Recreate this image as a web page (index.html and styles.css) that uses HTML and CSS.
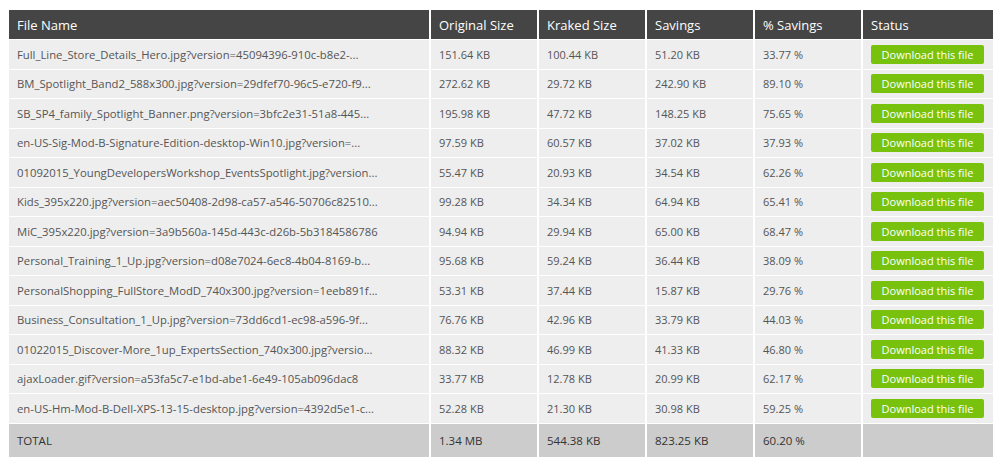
FILE: index.html
```html
<!DOCTYPE html>
<html>
<head>
<meta charset="utf-8">
<link rel="stylesheet" href="styles.css">
</head>
<body>
<table class="results">
  <thead>
    <tr>
      <th class="c-name">File Name</th>
      <th class="c-num">Original Size</th>
      <th class="c-num">Kraked Size</th>
      <th class="c-num">Savings</th>
      <th class="c-num">% Savings</th>
      <th class="c-status">Status</th>
    </tr>
  </thead>
  <tbody>
    <tr><td>Full_Line_Store_Details_Hero.jpg?version=45094396-910c-b8e2-...</td><td>151.64 KB</td><td>100.44 KB</td><td>51.20 KB</td><td>33.77 %</td><td><a class="btn">Download this file</a></td></tr>
    <tr><td>BM_Spotlight_Band2_588x300.jpg?version=29dfef70-96c5-e720-f9...</td><td>272.62 KB</td><td>29.72 KB</td><td>242.90 KB</td><td>89.10 %</td><td><a class="btn">Download this file</a></td></tr>
    <tr><td>SB_SP4_family_Spotlight_Banner.png?version=3bfc2e31-51a8-445...</td><td>195.98 KB</td><td>47.72 KB</td><td>148.25 KB</td><td>75.65 %</td><td><a class="btn">Download this file</a></td></tr>
    <tr><td>en-US-Sig-Mod-B-Signature-Edition-desktop-Win10.jpg?version=...</td><td>97.59 KB</td><td>60.57 KB</td><td>37.02 KB</td><td>37.93 %</td><td><a class="btn">Download this file</a></td></tr>
    <tr><td>01092015_YoungDevelopersWorkshop_EventsSpotlight.jpg?version...</td><td>55.47 KB</td><td>20.93 KB</td><td>34.54 KB</td><td>62.26 %</td><td><a class="btn">Download this file</a></td></tr>
    <tr><td>Kids_395x220.jpg?version=aec50408-2d98-ca57-a546-50706c82510...</td><td>99.28 KB</td><td>34.34 KB</td><td>64.94 KB</td><td>65.41 %</td><td><a class="btn">Download this file</a></td></tr>
    <tr><td>MiC_395x220.jpg?version=3a9b560a-145d-443c-d26b-5b3184586786</td><td>94.94 KB</td><td>29.94 KB</td><td>65.00 KB</td><td>68.47 %</td><td><a class="btn">Download this file</a></td></tr>
    <tr><td>Personal_Training_1_Up.jpg?version=d08e7024-6ec8-4b04-8169-b...</td><td>95.68 KB</td><td>59.24 KB</td><td>36.44 KB</td><td>38.09 %</td><td><a class="btn">Download this file</a></td></tr>
    <tr><td>PersonalShopping_FullStore_ModD_740x300.jpg?version=1eeb891f...</td><td>53.31 KB</td><td>37.44 KB</td><td>15.87 KB</td><td>29.76 %</td><td><a class="btn">Download this file</a></td></tr>
    <tr><td>Business_Consultation_1_Up.jpg?version=73dd6cd1-ec98-a596-9f...</td><td>76.76 KB</td><td>42.96 KB</td><td>33.79 KB</td><td>44.03 %</td><td><a class="btn">Download this file</a></td></tr>
    <tr><td>01022015_Discover-More_1up_ExpertsSection_740x300.jpg?versio...</td><td>88.32 KB</td><td>46.99 KB</td><td>41.33 KB</td><td>46.80 %</td><td><a class="btn">Download this file</a></td></tr>
    <tr><td>ajaxLoader.gif?version=a53fa5c7-e1bd-abe1-6e49-105ab096dac8</td><td>33.77 KB</td><td>12.78 KB</td><td>20.99 KB</td><td>62.17 %</td><td><a class="btn">Download this file</a></td></tr>
    <tr><td>en-US-Hm-Mod-B-Dell-XPS-13-15-desktop.jpg?version=4392d5e1-c...</td><td>52.28 KB</td><td>21.30 KB</td><td>30.98 KB</td><td>59.25 %</td><td><a class="btn">Download this file</a></td></tr>
  </tbody>
  <tfoot>
    <tr><td>TOTAL</td><td>1.34 MB</td><td>544.38 KB</td><td>823.25 KB</td><td>60.20 %</td><td></td></tr>
  </tfoot>
</table>
</body>
</html>
```

FILE: styles.css
```css
html, body {
  margin: 0;
  padding: 0;
  background: #ffffff;
}

body {
  padding: 10px 8px 0 9px;
  font-family: "Open Sans", "Liberation Sans", sans-serif;
}

.results {
  width: 984px;
  border-collapse: separate;
  border-spacing: 0;
  table-layout: fixed;
}

.results th,
.results td {
  border-right: 2px solid #ffffff;
  border-bottom: 1px solid #ffffff;
  padding: 0 8px;
  text-align: left;
  white-space: nowrap;
  overflow: hidden;
}

.results tr > :last-child { border-right: none; }
.results tfoot td { border-bottom: none; }

.results th {
  background: #454545;
  color: #ffffff;
  font-size: 13px;
  font-weight: 400;
  height: 29px;
}

.c-name { width: 404px; }
.c-num { width: 90px; }
.c-status { width: 114px; }

.results tbody td {
  background: #eeeeee;
  color: #555555;
  font-size: 11px;
  height: 28.5px;
}

.results tbody td:first-child {
  font-size: 11.3px;
}

.results tfoot td {
  background: #cccccc;
  color: #333333;
  font-size: 11.5px;
  height: 33px;
}

.btn {
  display: block;
  width: 113px;
  height: 19px;
  line-height: 19px;
  background: #78c20e;
  color: #ffffff;
  font-size: 11px;
  text-align: center;
  border-radius: 2px;
  cursor: pointer;
}
```
